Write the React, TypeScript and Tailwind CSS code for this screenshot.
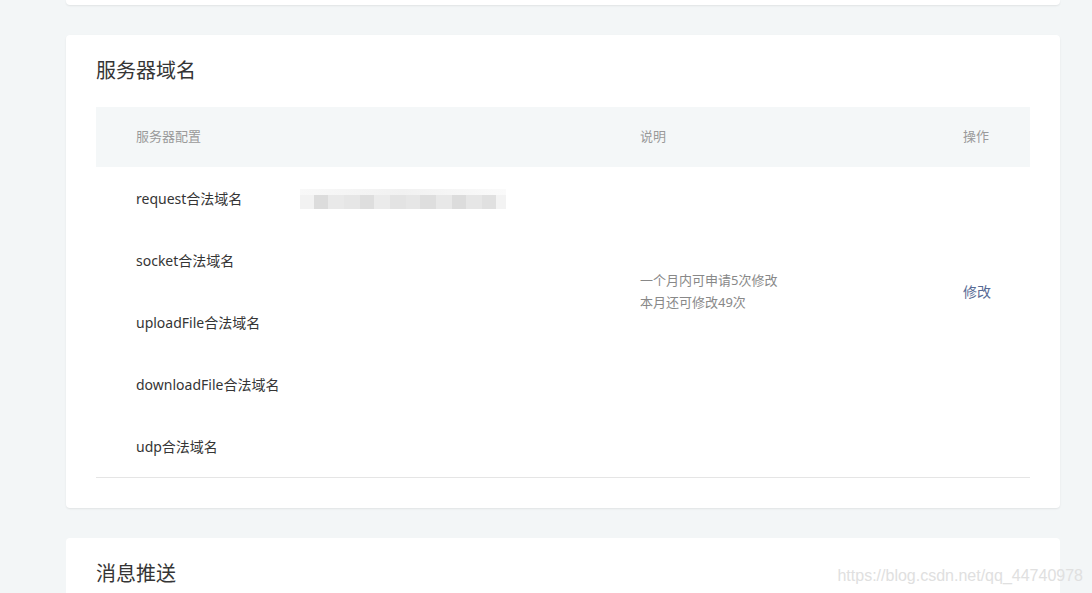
import React from 'react';

const rows = ['request合法域名', 'socket合法域名', 'uploadFile合法域名', 'downloadFile合法域名', 'udp合法域名'];

// pixelated blur over the request domain value
const blur = [
  { w: 14, c: 'bg-[#f2f2f2]' },
  { w: 14, c: 'bg-[#dcdcdc]' },
  { w: 16, c: 'bg-[#e9e9e9]' },
  { w: 16, c: 'bg-[#e6e6e6]' },
  { w: 14, c: 'bg-[#dedede]' },
  { w: 16, c: 'bg-[#ebebeb]' },
  { w: 16, c: 'bg-[#e3e3e3]' },
  { w: 14, c: 'bg-[#e6e6e6]' },
  { w: 16, c: 'bg-[#dedede]' },
  { w: 16, c: 'bg-[#e8e8e8]' },
  { w: 14, c: 'bg-[#dcdcdc]' },
  { w: 16, c: 'bg-[#e6e6e6]' },
  { w: 14, c: 'bg-[#e0e0e0]' },
  { w: 10, c: 'bg-[#f3f3f3]' },
];

const App: React.FC = () => {
  return (
    <div
      className="w-[1092px] h-[593px] overflow-hidden bg-[#f3f6f7] pl-[66px] pr-[32px]"
      style={{ fontFamily: '"Noto Sans", "Noto Sans CJK SC", sans-serif' }}
    >
      {/* previous card, only its bottom edge shows */}
      <div className="h-[5px] bg-white rounded-b shadow-[0_1px_2px_rgba(0,0,0,0.08)]"></div>

      {/* Server domain card */}
      <div className="mt-[30px] bg-white rounded shadow-[0_1px_2px_rgba(0,0,0,0.08)] px-[30px] pt-[22px] pb-[30px]">
        <h2 className="text-[20px] leading-[28px] text-[#353535] font-normal mb-[22px]">服务器域名</h2>

        <div className="relative border-b border-[#e5e5e5]">
          <div className="grid grid-cols-[544px_323px_1fr] h-[60px] items-center bg-[#f4f7f8] text-[13px] text-[#9a9a9a]">
            <div className="pl-10">服务器配置</div>
            <div>说明</div>
            <div>操作</div>
          </div>

          <div className="grid grid-cols-[544px_323px_1fr] grid-rows-[repeat(5,62px)] text-[14px] text-[#353535]">
            {rows.map((r, i) => (
              <div key={r} className="col-start-1 pl-10 flex items-center" style={{ gridRowStart: i + 1 }}>
                <span className="w-[164px]">{r}</span>
                {i === 0 && (
                  <div className="flex flex-col mt-[2px]">
                    <div className="h-[6px] w-[206px] bg-gradient-to-r from-[#f8f8f8] via-[#f1f1f1] to-[#fafafa]"></div>
                    <div className="flex h-[14px]">
                      {blur.map((b, j) => (
                        <div key={j} className={b.c} style={{ width: b.w }}></div>
                      ))}
                    </div>
                  </div>
                )}
              </div>
            ))}
            <div className="col-start-2 row-start-1 row-span-5 flex flex-col justify-center text-[13px] leading-[22px] text-[#888888] pb-[62px]">
              <div>一个月内可申请5次修改</div>
              <div>本月还可修改49次</div>
            </div>
            <div className="col-start-3 row-start-1 row-span-5 flex items-center text-[14px] text-[#576b95] pb-[62px]">
              <span>修改</span>
            </div>
          </div>
        </div>
      </div>

      {/* Message push card */}
      <div className="relative mt-[30px] bg-white rounded-t h-[80px] px-[30px] pt-[22px]">
        <h2 className="text-[20px] leading-[28px] text-[#353535] font-normal">消息推送</h2>
        <div
          className="absolute right-[-23px] top-[26px] text-[16px] text-[#e0e0e0]"
          style={{ fontFamily: '"Liberation Sans", Arial, sans-serif' }}
        >
          https://blog.csdn.net/qq_44740978
        </div>
      </div>
    </div>
  );
};

export default App;
